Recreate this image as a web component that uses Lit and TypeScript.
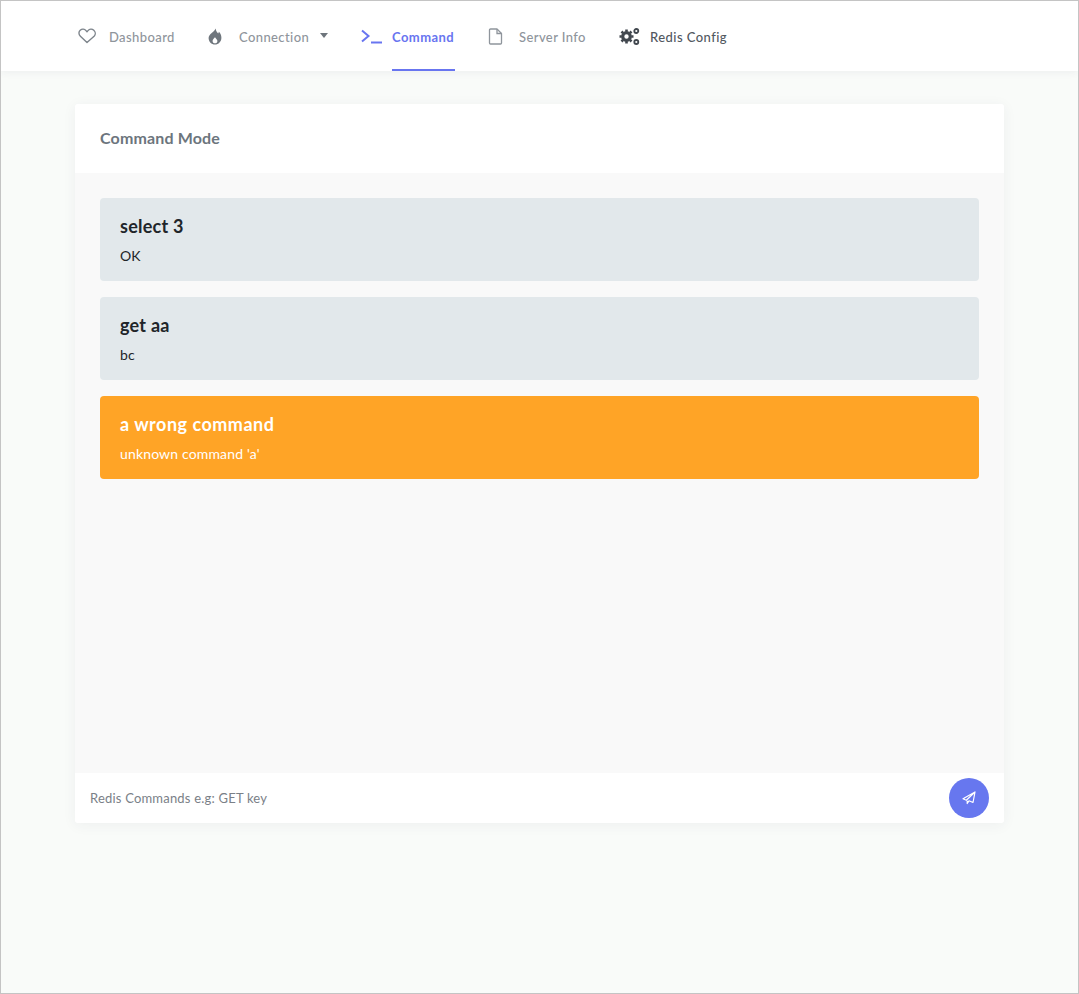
import { LitElement, html, css } from "lit";
import { customElement } from "lit/decorators.js";

@customElement("app-root")
export class AppRoot extends LitElement {
  static styles = css`
    :host { display: block; box-sizing: border-box; height: 994px; border: 1px solid #c4c4c4; background: #f9fbf9; font-family: "Lato", "Noto Sans", sans-serif; color: #212529; overflow: hidden; }
    .nav { height: 70px; background: #fff; box-shadow: 0 1px 8px rgba(50,50,93,.07); display: flex; padding-left: 77px; box-sizing: border-box; }
    .item { display: flex; align-items: center; height: 70px; box-sizing: border-box; font-size: 13px; color: #8f959c; font-weight: 500; letter-spacing: .4px; padding-top: 2px; }
    .item svg { display: block; flex: none; margin-top: -2px; }
    .i1 { width: 130px; } .i1 span { margin-left: 13px; }
    .i2 { width: 153px; } .i2 span { margin-left: 17px; }
    .i3 { width: 127px; color: #6875f0; font-weight: 700; padding-top: 0; } .i3 svg { margin-top: 0; } .i3 .lab { margin-left: 10px; align-self: stretch; display: flex; align-items: center; border-bottom: 2px solid #6875f0; padding: 4px 1px 0 0; letter-spacing: .45px; }
    .i4 { width: 131px; } .i4 span { margin-left: 16px; }
    .i5 { color: #52585f; letter-spacing: .45px; } .i5 span { margin-left: 10px; }
    .caret { margin-left: 11px; width: 0; height: 0; border: 4px solid transparent; border-top: 5px solid #6e757c; border-bottom: 0; margin-top: -3px; }
    .card { margin: 33px 74px 0 74px; box-shadow: 0 2px 14px rgba(50,50,93,.06); border-radius: 3px; overflow: hidden; }
    .head { height: 69px; box-sizing: border-box; padding: 0 0 2px 25px; background: #fff; display: flex; align-items: center; font-size: 16px; font-weight: 700; color: #6c757d; letter-spacing: .15px; }
    .body { height: 600px; box-sizing: border-box; background: #f9f9f9; padding: 25px; display: flex; flex-direction: column; gap: 16px; }
    .msg { height: 83px; box-sizing: border-box; border-radius: 4px; background: #e2e8eb; padding: 16px 20px 0; color: #212529; }
    .msg h4 { margin: 0; font-size: 18px; line-height: 24px; font-weight: 700; letter-spacing: .25px; }
    .msg p { margin: 9px 0 0; font-size: 14px; line-height: 17px; letter-spacing: .15px; }
    .msg.err { background: #ffa426; color: #fff; }
    .msg.err h4 { letter-spacing: .5px; }
    .foot { height: 50px; background: #fff; display: flex; align-items: center; justify-content: space-between; padding: 0 15px; font-size: 13px; color: #7a8087; letter-spacing: .2px; }
    .send { width: 40px; height: 40px; border-radius: 50%; background: #6777ef; display: flex; align-items: center; justify-content: center; }
  `;

  render() {
    return html`
      <div class="nav">
        <div class="item i1">
          <svg width="18" height="16" viewBox="0 0 18 16" fill="none" stroke="#7d848b" stroke-width="1.4"><path d="M9 14.6 2.4 8.2C.4 6.2.6 3.600 2.200 2.200 4 .7 6.600 1 8 2.600L9 3.700l1-1.100c1.400-1.600 4-1.900 5.800-.4 1.600 1.400 1.800 4 .8 5.400-.2.3-.5.6-.8 1Z" stroke-linejoin="round"/></svg>
          <span>Dashboard</span>
        </div>
        <div class="item i2">
          <svg width="14" height="17" viewBox="0 0 14 17"><path fill="#6f767d" d="M7.600.4c.5 2.600 1.300 3.600 2.600 5 .4-.5.6-1 .7-1.600C12.600 5.200 13.400 7.400 13.400 9.800c0 3.800-2.800 6.800-6.400 6.800S.6 13.600.6 10C.6 6 5.800 4.400 7.600.4Z"/><path fill="#fff" d="M7 9.200c-1.400 1.500-2.400 2.400-2.400 3.800 0 1.400 1 2.300 2.400 2.300s2.400-.9 2.400-2.300C9.400 11.600 8 10.600 7 9.200Z"/></svg>
          <span>Connection</span><i class="caret"></i>
        </div>
        <div class="item i3">
          <svg width="21" height="15" viewBox="0 0 21 15" fill="none" stroke="#6875f0" stroke-width="2"><path d="M1 1.500 7.500 7 1 12.500"/><path d="M10 13.500h11"/></svg>
          <span class="lab">Command</span>
        </div>
        <div class="item i4">
          <svg width="15" height="17" viewBox="0 0 15 17" fill="none" stroke="#8f959c" stroke-width="1.300"><path d="M2.500 1h6.500l4.500 4.500V15a1 1 0 0 1-1 1h-10a1 1 0 0 1-1-1V2a1 1 0 0 1 1-1Z" stroke-linejoin="round"/><path d="M9 1v4.500h4.500"/></svg>
          <span>Server Info</span>
        </div>
        <div class="item i5">
          <svg width="21" height="17" viewBox="0 0 21 17">
            <g fill="none" stroke="#41474e">
              <circle cx="7.500" cy="8.500" r="3.800" stroke-width="3.200"/>
              <path stroke-width="2.600" d="M7.500 1.500v2.200M7.500 13.300v2.200M.5 8.500h2.200M12.300 8.500h2.200M2.500 3.500l1.600 1.600M10.900 11.900l1.600 1.600M2.500 13.500l1.600-1.600M10.900 5.100l1.600-1.600"/>
              <circle cx="17.300" cy="3" r="2" stroke-width="1.800"/>
              <circle cx="17.300" cy="14" r="2" stroke-width="1.800"/>
            </g>
          </svg>
          <span>Redis Config</span>
        </div>
      </div>
      <div class="card">
        <div class="head">Command Mode</div>
        <div class="body">
          <div class="msg"><h4>select 3</h4><p>OK</p></div>
          <div class="msg"><h4>get aa</h4><p>bc</p></div>
          <div class="msg err"><h4>a wrong command</h4><p>unknown command 'a'</p></div>
        </div>
        <div class="foot">
          <span>Redis Commands e.g: GET key</span>
          <div class="send">
            <svg width="14" height="14" viewBox="0 0 14 14" fill="none" stroke="#fff" stroke-width="1.200" stroke-linejoin="round"><path d="M13 1 1 7.800l3.300 1.400L13 1l-2 10.500-4-1.700-1.800 2.700V9.700"/></svg>
          </div>
        </div>
      </div>
    `;
  }
}
